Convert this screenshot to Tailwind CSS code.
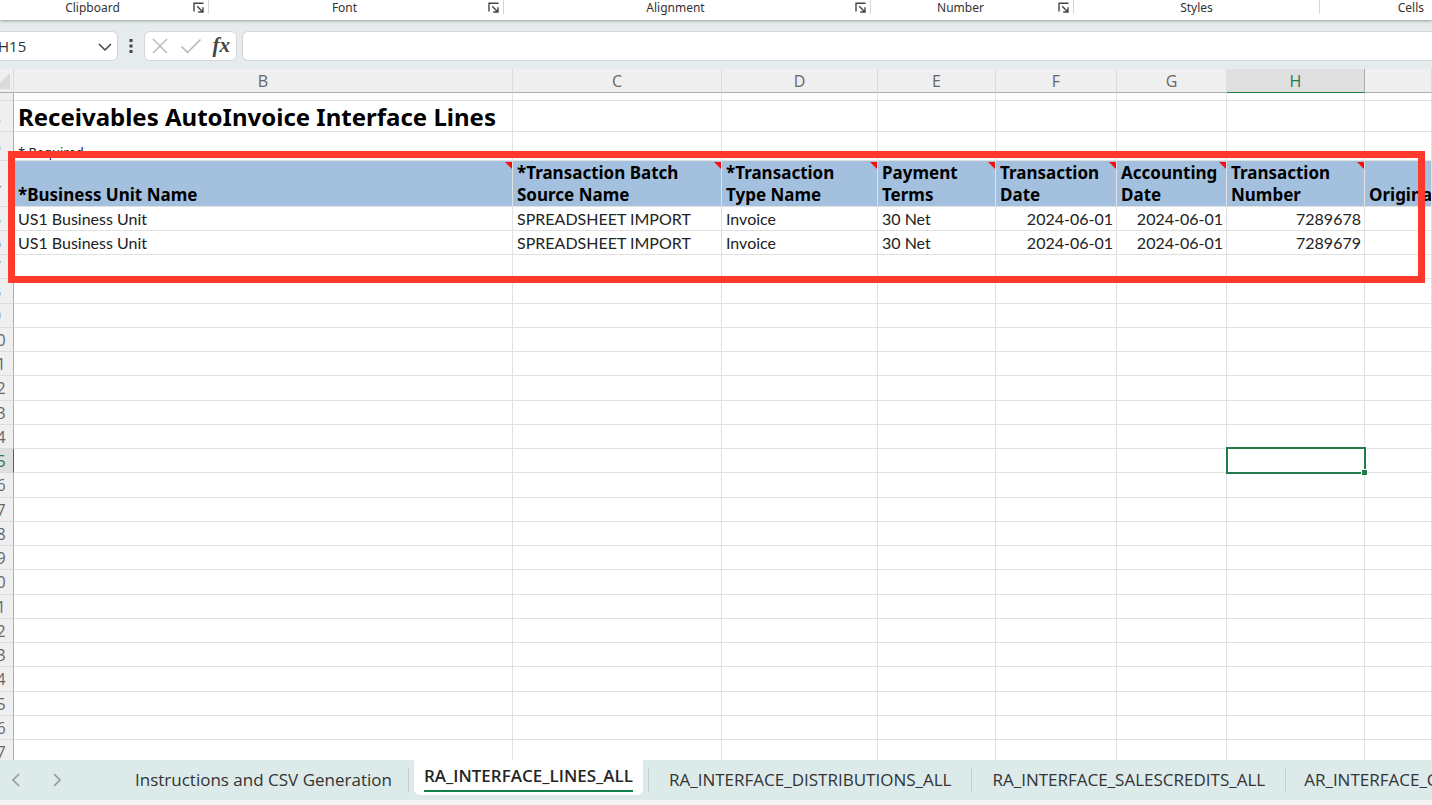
<!DOCTYPE html>
<html lang="en">
<head>
    <meta charset="UTF-8">
    <meta name="viewport" content="width=device-width, initial-scale=1.0">
    <title>Receivables AutoInvoice Interface Lines</title>
    <script src="https://cdn.jsdelivr.net/npm/@tailwindcss/browser@4"></script>
</head>
<body class="flex h-screen flex-col overflow-hidden bg-[#f3f4f4] font-['Open_Sans',sans-serif] text-[#333]">
    <svg class="hidden">
        <symbol id="launcher" viewBox="0 0 12 12">
            <path d="M1 9.5V1.2H10.5M4.2 4.2L9.4 9.4M10 5.2V10H5.2" fill="none" stroke="#444" stroke-width="1.4"/>
        </symbol>
        <symbol id="note" viewBox="0 0 7 7">
            <path d="M0 0H7V7Z" fill="#fb0d0d"/>
        </symbol>
    </svg>

    <!-- Ribbon group captions -->
    <div class="relative z-10 flex h-5 shrink-0 bg-white font-['Noto_Sans',sans-serif] text-xs leading-4 shadow-[0_1px_3px_rgba(0,0,0,0.35)]">
        <div class="flex h-[14px] w-[209px] shrink-0 border-r border-[#d5d5d5]">
            <span class="flex-1 pr-2 text-center">Clipboard</span>
            <button class="mt-[2px] mr-[3px] size-3" aria-label="Clipboard settings"><svg class="size-3"><use href="#launcher"/></svg></button>
        </div>
        <div class="flex h-[14px] w-[295px] shrink-0 border-r border-[#d5d5d5]">
            <span class="flex-1 pr-2 text-center">Font</span>
            <button class="mt-[2px] mr-[3px] size-3" aria-label="Font settings"><svg class="size-3"><use href="#launcher"/></svg></button>
        </div>
        <div class="flex h-[14px] w-[367px] shrink-0 border-r border-[#d5d5d5]">
            <span class="flex-1 pr-2 text-center">Alignment</span>
            <button class="mt-[2px] mr-[3px] size-3" aria-label="Alignment settings"><svg class="size-3"><use href="#launcher"/></svg></button>
        </div>
        <div class="flex h-[14px] w-[203px] shrink-0 border-r border-[#d5d5d5]">
            <span class="flex-1 pr-2 text-center">Number</span>
            <button class="mt-[2px] mr-[3px] size-3" aria-label="Number settings"><svg class="size-3"><use href="#launcher"/></svg></button>
        </div>
        <div class="flex h-[14px] w-[246px] shrink-0 border-r border-[#d5d5d5]">
            <span class="flex-1 text-center">Styles</span>
        </div>
        <div class="flex h-[14px] flex-1">
            <span class="flex-1 pr-2 text-right">Cells</span>
        </div>
    </div>

    <!-- Formula bar -->
    <div class="flex h-[49px] shrink-0 items-center bg-[#e6ecee] pt-[3px]">
        <div class="-ml-4 flex h-[30px] w-[134px] shrink-0 items-center rounded-md border border-[#d3d7d9] bg-white">
            <input class="w-[112px] pl-[13px] text-[15px] outline-none" aria-label="Name box" value="H15">
            <button aria-label="Open name list">
                <svg class="size-4" viewBox="0 0 16 16" fill="none" stroke="#444" stroke-width="1.5"><path d="M2 6L8 12L14 6"/></svg>
            </button>
        </div>
        <svg class="mx-[11px] h-4 w-1 shrink-0" viewBox="0 0 4 16" fill="#444"><path d="M.5 1h3v3h-3zM.5 6.5h3v3h-3zM.5 12h3v3h-3z"/></svg>
        <div class="flex h-[30px] w-[93px] shrink-0 items-center justify-between rounded-md border border-[#d3d7d9] bg-white px-[6px]">
            <button aria-label="Cancel">
                <svg class="size-[18px]" viewBox="0 0 18 18" fill="none" stroke="#b5b5b5" stroke-width="1.4"><path d="M2 2L16 16M16 2L2 16"/></svg>
            </button>
            <button aria-label="Enter">
                <svg class="h-[18px] w-[22px]" viewBox="0 0 22 18" fill="none" stroke="#b5b5b5" stroke-width="1.5"><path d="M1.500 9.500L7.500 15.500L20.500 2.500"/></svg>
            </button>
            <button class="pb-[2px] font-['Liberation_Serif',serif] text-[21px] leading-6 font-bold italic text-[#444]" aria-label="Insert function">fx</button>
        </div>
        <input class="ml-[5px] h-[30px] min-w-0 flex-1 rounded-l-md border border-r-0 border-[#d3d7d9] bg-white px-2 outline-none" aria-label="Formula bar">
    </div>

    <!-- Sheet -->
    <div class="relative min-h-0 flex-1 overflow-hidden bg-white">
        <table class="-ml-5 w-[calc(100%+20px)] table-fixed border-separate border-spacing-0 font-[Lato,sans-serif] text-base leading-5 text-[#222] [&_td]:overflow-hidden [&_td]:border-r [&_td]:border-b [&_td]:border-[#e1e1e1] [&_td]:pt-0 [&_td]:pr-[3px] [&_td]:pl-1 [&_td]:align-bottom [&_td]:whitespace-nowrap">
            <colgroup>
                <col class="w-[34px]">
                <col class="w-[499px]">
                <col class="w-[209px]">
                <col class="w-[156px]">
                <col class="w-[118px]">
                <col class="w-[121px]">
                <col class="w-[110px]">
                <col class="w-[138px]">
                <col>
            </colgroup>
            <thead class="font-['Open_Sans',sans-serif] text-base leading-5 text-[#666] [&_th]:border-r [&_th]:border-b [&_th]:border-r-[#dcdcdc] [&_th]:border-b-[#adadad] [&_th]:bg-[#efefef] [&_th]:p-0 [&_th]:font-normal">
                <tr class="h-6">
                    <th><svg class="ml-auto mr-[3px] size-4" viewBox="0 0 16 16"><path d="M16 0V16H0Z" fill="#dadada"/></svg></th>
                    <th>B</th>
                    <th>C</th>
                    <th>D</th>
                    <th>E</th>
                    <th>F</th>
                    <th>G</th>
                    <th class="border-b-2 border-r-[#adadad]! border-b-[#217c4b]! bg-[#dfdfdf]! text-[#217c4b]">H</th>
                    <th></th>
                </tr>
            </thead>
            <tbody id="rows" class="[&_th]:border-r [&_th]:border-b [&_th]:border-r-[#adadad] [&_th]:border-b-[#dcdcdc] [&_th]:bg-[#efefef] [&_th]:p-0 [&_th]:font-['Open_Sans',sans-serif] [&_th]:text-base [&_th]:leading-5 [&_th]:font-normal [&_th]:text-[#666]">
                <tr class="h-2 leading-none"><th></th><td></td><td></td><td></td><td></td><td></td><td></td><td></td><td></td></tr>
                <tr class="h-[31px]">
                    <th>2</th>
                    <td class="font-['Noto_Sans',sans-serif] text-2xl leading-[28px] font-bold text-black">Receivables AutoInvoice Interface Lines</td>
                    <td></td><td></td><td></td><td></td><td></td><td></td><td></td>
                </tr>
                <tr class="h-[29px]">
                    <th>3</th>
                    <td class="font-['Noto_Sans',sans-serif] text-[13px] leading-4">* Required</td>
                    <td></td><td></td><td></td><td></td><td></td><td></td><td></td>
                </tr>
                <tr class="h-[46px] font-['Noto_Sans',sans-serif] text-[17px] leading-[22px] font-bold text-black [&_td]:relative [&_td]:border-[#a3c1df] [&_td]:bg-[#a3c1df]">
                    <th>4</th>
                    <td>*Business Unit Name<svg class="absolute top-px right-0 size-[7px]"><use href="#note"/></svg></td>
                    <td>*Transaction Batch<br>Source Name<svg class="absolute top-px right-0 size-[7px]"><use href="#note"/></svg></td>
                    <td>*Transaction<br>Type Name<svg class="absolute top-px right-0 size-[7px]"><use href="#note"/></svg></td>
                    <td>Payment<br>Terms<svg class="absolute top-px right-0 size-[7px]"><use href="#note"/></svg></td>
                    <td>Transaction<br>Date<svg class="absolute top-px right-0 size-[7px]"><use href="#note"/></svg></td>
                    <td>Accounting<br>Date<svg class="absolute top-px right-0 size-[7px]"><use href="#note"/></svg></td>
                    <td>Transaction<br>Number<svg class="absolute top-px right-0 size-[7px]"><use href="#note"/></svg></td>
                    <td>Original</td>
                </tr>
                <tr class="h-6 [&_td]:pb-px">
                    <th>5</th>
                    <td>US1 Business Unit</td>
                    <td>SPREADSHEET IMPORT</td>
                    <td>Invoice</td>
                    <td>30 Net</td>
                    <td class="text-right">2024-06-01</td>
                    <td class="text-right">2024-06-01</td>
                    <td class="text-right">7289678</td>
                    <td></td>
                </tr>
                <tr class="h-6 [&_td]:pb-px">
                    <th>6</th>
                    <td>US1 Business Unit</td>
                    <td>SPREADSHEET IMPORT</td>
                    <td>Invoice</td>
                    <td>30 Net</td>
                    <td class="text-right">2024-06-01</td>
                    <td class="text-right">2024-06-01</td>
                    <td class="text-right">7289679</td>
                    <td></td>
                </tr>
            </tbody>
        </table>

        <!-- Highlight around the header and data rows -->
        <div class="pointer-events-none absolute top-[82px] right-[7px] left-2 h-[132px] border-[7px] border-[#ff3a2d]"></div>
    </div>

    <!-- Sheet tabs -->
    <nav class="flex h-10 shrink-0 items-center overflow-hidden bg-[#dceaea] text-[17px] leading-6 whitespace-nowrap" aria-label="Sheets">
        <button class="ml-[10px]" aria-label="Previous sheet">
            <svg class="h-4 w-3" viewBox="0 0 12 16" fill="none" stroke="#8f9a9a" stroke-width="1.6"><path d="M9 2L3 8L9 14"/></svg>
        </button>
        <button class="ml-[29px]" aria-label="Next sheet">
            <svg class="h-4 w-3" viewBox="0 0 12 16" fill="none" stroke="#8f9a9a" stroke-width="1.6"><path d="M3 2L9 8L3 14"/></svg>
        </button>
        <a href="#" class="ml-[52px] border-r border-[#c5cfcf] pr-4 pl-5">Instructions and CSV Generation</a>
        <a href="#" class="ml-[5px] h-[35px] self-start rounded-b-md bg-white px-[10px] pt-1 font-semibold text-[#262626]"><span class="block border-b-2 border-[#13804a] pb-[2px]">RA_INTERFACE_LINES_ALL</span></a>
        <a href="#" class="ml-[5px] border-x border-[#c5cfcf] px-5">RA_INTERFACE_DISTRIBUTIONS_ALL</a>
        <a href="#" class="border-r border-[#c5cfcf] px-5">RA_INTERFACE_SALESCREDITS_ALL</a>
        <a href="#" class="px-[18px]">AR_INTERFACE_CONTS_ALL</a>
    </nav>
    <div class="h-[5px] shrink-0"></div>

    <script>
        // Blank rows below the data, with the selection on H15
        const rows = document.getElementById('rows');
        for (let n = 7; n <= 28; n++) {
            const tr = document.createElement('tr');
            tr.className = n % 4 === 0 ? 'h-[25px]' : 'h-6';
            const th = document.createElement('th');
            th.textContent = n;
            if (n === 15) {
                th.className = 'border-r-2 border-r-[#217c4b]! bg-[#dfdfdf]! text-[#217c4b]!';
            }
            tr.appendChild(th);
            for (const col of 'BCDEFGHI') {
                const td = document.createElement('td');
                if (n === 15 && col === 'H') {
                    td.className = 'relative overflow-visible!';
                    td.innerHTML = '<div class="absolute -top-[2px] -right-[2px] -bottom-[2px] -left-px border-2 border-[#217c4b]"></div>' +
                        '<div class="absolute -right-[3px] -bottom-[3px] size-[6px] border-t border-l border-white bg-[#217c4b]"></div>';
                }
                tr.appendChild(td);
            }
            rows.appendChild(tr);
        }
    </script>
</body>
</html>
